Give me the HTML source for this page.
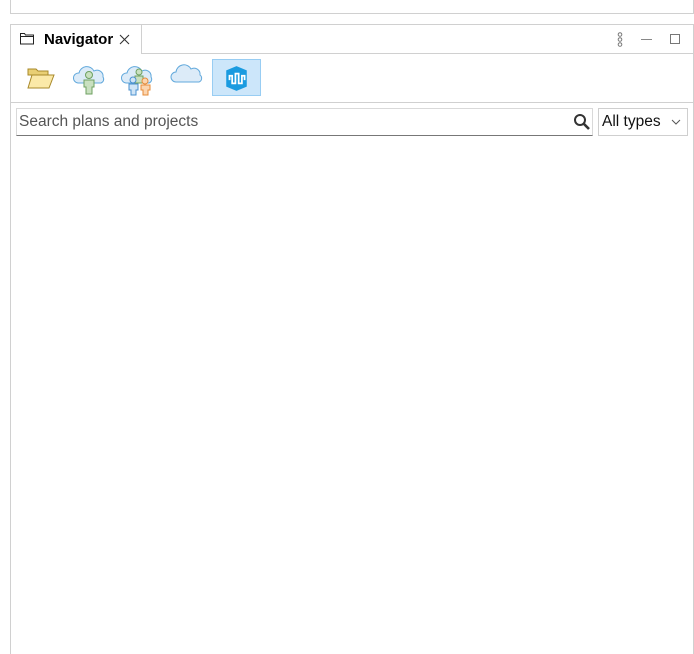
<!DOCTYPE html>
<html><head><meta charset="utf-8"><style>
*{margin:0;padding:0;box-sizing:border-box}
html,body{width:694px;height:654px;overflow:hidden}
body{background:#fff;position:relative;font-family:"Segoe UI","Liberation Sans",sans-serif}
.abs{position:absolute}
</style></head><body>
<div class="abs" style="left:10px;top:0;width:684px;height:14px;border:1px solid #d0d0d0;border-top:none"></div>
<div class="abs" style="left:10px;top:24px;width:684px;height:630px;border:1px solid #d0d0d0;border-bottom:none"></div>
<div class="abs" style="left:141px;top:53px;width:553px;height:1px;background:#d0d0d0"></div>
<div class="abs" style="left:141px;top:24px;width:1px;height:30px;background:#d0d0d0"></div>
<svg class="abs" style="left:20px;top:32px" width="14" height="13" viewBox="0 0 14 13"><path d="M0.5 1.5h4l1 1.5h8v9h-13z M0.5 4.5h13" fill="none" stroke="#222" stroke-width="1"/></svg>
<div class="abs" style="left:44px;top:31px;font-size:15px;font-weight:bold;color:#000">Navigator</div>
<svg class="abs" style="left:119px;top:34px" width="11" height="11"><path d="M1 1L10 10M10 1L1 10" stroke="#333" stroke-width="1.1"/></svg>
<svg class="abs" style="left:616px;top:32px" width="8" height="15"><circle cx="4" cy="2.5" r="1.8" fill="none" stroke="#777"/><circle cx="4" cy="7.5" r="1.8" fill="none" stroke="#777"/><circle cx="4" cy="12.5" r="1.8" fill="none" stroke="#777"/></svg>
<div class="abs" style="left:641px;top:39px;width:11px;height:1px;background:#888"></div>
<div class="abs" style="left:670px;top:34px;width:10px;height:10px;border:1px solid #777"></div>
<svg class="abs" style="left:27px;top:67px" width="28" height="23" viewBox="0 0 28 23"><path d="M1 2h8l2 2h10v4H1z" fill="#e9cf74" stroke="#a8892a"/><path d="M1 21L5 8h22l-5 13z" fill="#fbe9a8" stroke="#a8892a"/></svg>
<svg class="abs" style="left:72px;top:62px" width="34" height="33" viewBox="0 0 34 33"><path d="M6 21a5 5 0 0 1 1-10a8 8 0 0 1 15-2a6 6 0 0 1 9 6a4 4 0 0 1-2 6z" fill="#dcebf8" stroke="#62a9dc"/><circle cx="17" cy="13" r="3.5" fill="#c9e0c0" stroke="#6ea060"/><path d="M12 18h10v7h-2v7h-6v-7h-2z" fill="#c9e0c0" stroke="#6ea060"/></svg>
<svg class="abs" style="left:120px;top:62px" width="36" height="34" viewBox="0 0 36 34"><path d="M6 21a5 5 0 0 1 1-10a8 8 0 0 1 15-2a6 6 0 0 1 9 6a4 4 0 0 1-2 6z" fill="#dcebf8" stroke="#62a9dc"/><circle cx="19" cy="10" r="3" fill="#c9e0c0" stroke="#6ea060"/><path d="M15 14h8v7h-8z" fill="#c9e0c0" stroke="#6ea060"/><circle cx="13" cy="18" r="3" fill="#cfe4f6" stroke="#4a90cf"/><path d="M9 22h9v6h-2v5h-5v-5h-2z" fill="#cfe4f6" stroke="#4a90cf"/><circle cx="25" cy="19" r="3" fill="#fbd5b0" stroke="#e48b3a"/><path d="M21 23h9v5h-2v5h-5v-5h-2z" fill="#fbd5b0" stroke="#e48b3a"/></svg>
<svg class="abs" style="left:170px;top:61px" width="34" height="23" viewBox="0 0 34 23"><path d="M6 21a5 5 0 0 1 0-10a8 8 0 0 1 15-3a6 6 0 0 1 9 6a4 4 0 0 1-1 7z" fill="#dcebf8" stroke="#62a9dc"/></svg>
<div class="abs" style="left:212px;top:59px;width:49px;height:37px;background:#cce6fa;border:1px solid #98cdf3"></div>
<svg class="abs" style="left:224px;top:65px" width="25" height="27" viewBox="0 0 23 25"><path d="M11.5 1L21 5v15l-9.5 4L2 20V5z" fill="#1a9be0"/><path d="M5 14v-4h2.5v7h3V8h3v9h3v-7H19v4" fill="none" stroke="#fff" stroke-width="1.6"/></svg>
<div class="abs" style="left:11px;top:102px;width:682px;height:1px;background:#d0d0d0"></div>
<div class="abs" style="left:16px;top:108px;width:577px;height:28px;border:1px solid #d9d9d9;border-bottom:1px solid #777"></div>
<div class="abs" style="left:19px;top:113px;font-size:15.5px;color:#555">Search plans and projects</div>
<svg class="abs" style="left:573px;top:113px" width="18" height="18" viewBox="0 0 18 18"><circle cx="7" cy="7" r="5" fill="none" stroke="#333" stroke-width="2"/><path d="M10.5 10.5L16 16" stroke="#333" stroke-width="2.6"/></svg>
<div class="abs" style="left:598px;top:108px;width:90px;height:28px;border:1px solid #cfcfcf"></div>
<div class="abs" style="left:602px;top:113px;font-size:15.5px;color:#111">All types</div>
<svg class="abs" style="left:671px;top:119px" width="10" height="6"><path d="M1 1L5 5L9 1" fill="none" stroke="#555"/></svg>
</body></html>
